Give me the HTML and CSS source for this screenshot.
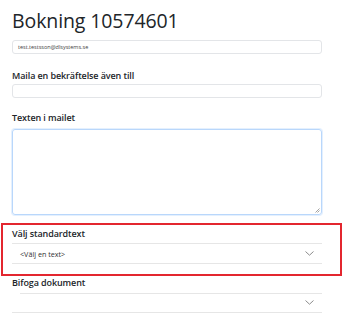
FILE: index.html
```html
<!DOCTYPE html>
<html lang="sv">
<head>
<meta charset="utf-8">
<link rel="stylesheet" href="styles.css">
</head>
<body>
<div class="page">
  <h1 class="title">Bokning 10574601</h1>
  <div class="input email">test.testsson@dlsystems.se</div>
  <div class="field">
    <label class="label">Maila en bekräftelse även till</label>
    <div class="input"></div>
  </div>
  <div class="field text-field">
    <label class="label">Texten i mailet</label>
    <div class="textarea">
      <svg class="grip" width="5" height="5" viewBox="0 0 5 5"><path d="M4.5 0.5 L0.5 4.5 M4.5 2.5 L2.5 4.5" stroke="#8a8a8a" stroke-width="0.8"/></svg>
    </div>
  </div>
  <div class="highlight">
    <label class="label">Välj standardtext</label>
    <div class="select">
      <span class="select-text">&lt;Välj en text&gt;</span>
      <svg class="chev" width="9" height="5" viewBox="0 0 9 5"><path d="M0.5 0.5 L4.5 4.2 L8.5 0.5" fill="none" stroke="#8c8c8c" stroke-width="1"/></svg>
    </div>
  </div>
  <div class="field attach">
    <label class="label">Bifoga dokument</label>
    <div class="select select2">
      <span class="select-text"></span>
      <svg class="chev" width="9" height="5" viewBox="0 0 9 5"><path d="M0.5 0.5 L4.5 4.2 L8.5 0.5" fill="none" stroke="#8c8c8c" stroke-width="1"/></svg>
    </div>
  </div>
</div>
</body>
</html>
```
FILE: styles.css
```css
html, body { margin: 0; padding: 0; background: #fff; }
body {
  font-family: "Open Sans", "Noto Sans", "Liberation Sans", sans-serif;
  color: #212529;
  width: 343px;
  overflow: hidden;
}
.page {
  display: flex;
  flex-direction: column;
  padding: 8px 21px 0 12px;
}
.title {
  margin: 0;
  font-size: 19.5px;
  line-height: 26px;
  font-weight: 500;
  letter-spacing: -0.1px;
}
.input {
  box-sizing: border-box;
  height: 14px;
  border: 1px solid #e3e5e8;
  border-radius: 3px;
  background: #fff;
}
.email {
  margin-top: 6px;
  font-size: 5.5px;
  line-height: 12px;
  padding-left: 5px;
  color: #444;
}
.field {
  display: flex;
  flex-direction: column;
}
.label {
  font-size: 9px;
  font-weight: 600;
  line-height: 14px;
  letter-spacing: -0.1px;
  color: #212529;
}
.field .label { margin-top: 15px; margin-bottom: 1px; }
.text-field .label { margin-top: 13px; margin-bottom: 4px; }
.textarea {
  box-sizing: border-box;
  height: 86px;
  border: 1px solid #b9d7fb;
  border-radius: 3px;
  box-shadow: 0 0 0 1px #e4f0fe;
  position: relative;
}
.grip { position: absolute; right: 1px; bottom: 1px; }
.highlight {
  margin: 8px -20px 0 -11px;
  border: 2px solid #e3262f;
  padding: 2px 18px 10px 9px;
  display: flex;
  flex-direction: column;
}
.highlight .label { margin-bottom: 2px; }
.select {
  box-sizing: border-box;
  height: 21px;
  border-top: 1px solid #e6e6e6;
  border-bottom: 1px solid #e6e6e6;
  display: flex;
  align-items: center;
  justify-content: space-between;
  padding: 0 8px 0 8px;
}
.select-text { font-size: 7.2px; color: #333; }
.attach .label { margin-top: 0; margin-bottom: 3px; }
.select2 {
  border-top: none;
  position: relative;
  height: 20px;
}
.select2::before {
  content: "";
  position: absolute;
  left: 8px;
  right: 0;
  top: 0;
  border-top: 1px solid #e6e6e6;
}
```
